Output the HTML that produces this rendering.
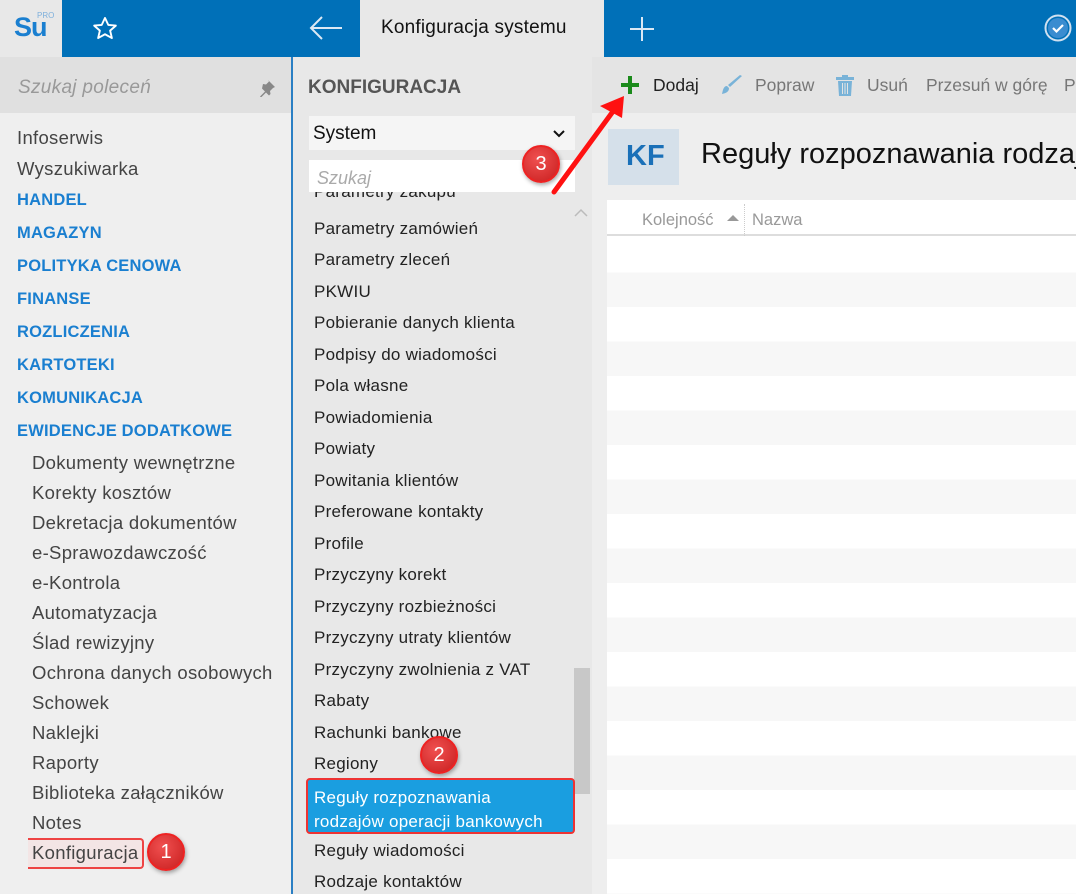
<!DOCTYPE html>
<html><head><meta charset="utf-8"><style>
*{margin:0;padding:0;box-sizing:border-box}
body{width:1076px;height:894px;overflow:hidden;position:relative;font-family:"Liberation Sans",sans-serif;background:#eee}
.a{position:absolute;white-space:nowrap}
.l{font-size:18.5px;color:#444;letter-spacing:.3px}
.h{font-size:16.5px;color:#1a7fd0;font-weight:bold;letter-spacing:.2px}
.m{font-size:17px;color:#222;left:314px;letter-spacing:.25px}
.badge{position:absolute;width:38px;height:38px;border-radius:50%;background:radial-gradient(circle at 40% 35%,#f05050,#c81e1e);border:2px solid #e22;color:#fff;font-size:20px;text-align:center;line-height:34px;box-shadow:1px 2px 4px rgba(0,0,0,.35)}
</style></head><body>
<!-- top bar -->
<div class="a" style="left:0;top:0;width:62px;height:57px;background:#e8e8e8"></div>
<div class="a" style="left:14px;top:12px;font-size:27px;color:#1a7fd0;font-weight:bold;letter-spacing:-1px">Su</div>
<div class="a" style="left:37px;top:11px;font-size:8px;color:#7fb0dc">PRO</div>
<div class="a" style="left:62px;top:0;width:298px;height:57px;background:#0070b8"></div>
<svg class="a" style="left:91px;top:15px" width="28" height="28" viewBox="0 0 24 24"><path d="M12 2.5l2.8 6 6.5.6-4.9 4.3 1.5 6.4L12 16.5l-5.9 3.3 1.5-6.4-4.9-4.3 6.5-.6z" fill="none" stroke="#fff" stroke-width="1.6" stroke-linejoin="round"/></svg>
<svg class="a" style="left:308px;top:14px" width="36" height="28" viewBox="0 0 36 28"><path d="M34 14H3M14 3L3 14l11 11" fill="none" stroke="#dbe8f4" stroke-width="2"/></svg>
<div class="a" style="left:360px;top:0;width:244px;height:57px;background:#e8e8e8"></div>
<div class="a" style="left:381px;top:17px;font-size:19px;color:#111;letter-spacing:.2px">Konfiguracja systemu</div>
<div class="a" style="left:604px;top:0;width:472px;height:57px;background:#0070b8"></div>
<svg class="a" style="left:628px;top:15px" width="28" height="28"><path d="M14 2v24M2 14h24" stroke="#dbe8f4" stroke-width="2"/></svg>
<svg class="a" style="left:1043px;top:13px" width="30" height="30"><circle cx="15" cy="15" r="12.5" fill="none" stroke="#cfe0f0" stroke-width="2"/><circle cx="15" cy="15" r="10" fill="#3a8cd0"/><path d="M10 15l3.5 3.5L20 12" fill="none" stroke="#fff" stroke-width="2.2"/></svg>
<!-- left panel -->
<div class="a" style="left:0;top:57px;width:291px;height:837px;background:#efefef"></div>
<div class="a" style="left:0;top:57px;width:291px;height:56px;background:#e0e0e0"></div>
<div class="a" style="left:18px;top:77px;font-size:19px;color:#999;font-style:italic;letter-spacing:.3px">Szukaj poleceń</div>
<svg class="a" style="left:258px;top:79px" width="18" height="18" viewBox="0 0 18 18"><path d="M10 1l7 7-2 1-3 3 .5 3-1.5 1.5-3-3-5 5-1-1 5-5-3-3L5 5l3 .5 3-3z" fill="#888"/></svg>
<div class="a" style="left:291px;top:57px;width:2px;height:837px;background:#2a7fc4"></div>
<div class="a l" style="left:17px;top:127px">Infoserwis</div>
<div class="a l" style="left:17px;top:158px">Wyszukiwarka</div>
<div class="a h" style="left:17px;top:191px">HANDEL</div>
<div class="a h" style="left:17px;top:224px">MAGAZYN</div>
<div class="a h" style="left:17px;top:257px">POLITYKA CENOWA</div>
<div class="a h" style="left:17px;top:290px">FINANSE</div>
<div class="a h" style="left:17px;top:323px">ROZLICZENIA</div>
<div class="a h" style="left:17px;top:356px">KARTOTEKI</div>
<div class="a h" style="left:17px;top:389px">KOMUNIKACJA</div>
<div class="a h" style="left:17px;top:422px">EWIDENCJE DODATKOWE</div>
<div class="a l" style="left:32px;top:452px">Dokumenty wewnętrzne</div>
<div class="a l" style="left:32px;top:482px">Korekty kosztów</div>
<div class="a l" style="left:32px;top:512px">Dekretacja dokumentów</div>
<div class="a l" style="left:32px;top:542px">e-Sprawozdawczość</div>
<div class="a l" style="left:32px;top:572px">e-Kontrola</div>
<div class="a l" style="left:32px;top:602px">Automatyzacja</div>
<div class="a l" style="left:32px;top:632px">Ślad rewizyjny</div>
<div class="a l" style="left:32px;top:662px">Ochrona danych osobowych</div>
<div class="a l" style="left:32px;top:692px">Schowek</div>
<div class="a l" style="left:32px;top:722px">Naklejki</div>
<div class="a l" style="left:32px;top:752px">Raporty</div>
<div class="a l" style="left:32px;top:782px">Biblioteka załączników</div>
<div class="a l" style="left:32px;top:812px">Notes</div>
<div class="a" style="left:28px;top:838px;width:116px;height:31px;border:2px solid #e44;border-left:none;border-radius:0 4px 4px 0;background:rgba(255,200,200,.25)"></div>
<div class="a l" style="left:32px;top:842px">Konfiguracja</div>
<div class="badge" style="left:147px;top:833px">1</div>
<!-- middle -->
<div class="a" style="left:293px;top:57px;width:299px;height:837px;background:#e8e8e8"></div>
<div class="a" style="left:308px;top:77px;font-size:19px;font-weight:bold;color:#555">KONFIGURACJA</div>
<div class="a" style="left:309px;top:116px;width:266px;height:34px;background:#f5f5f5"></div>
<div class="a" style="left:313px;top:123px;font-size:19px;color:#111">System</div>
<svg class="a" style="left:553px;top:130px" width="12" height="8"><path d="M1 1l5 5 5-5" fill="none" stroke="#111" stroke-width="2"/></svg>
<div class="a" style="left:309px;top:160px;width:266px;height:32px;background:#fff"></div>
<div class="a" style="left:317px;top:168px;font-size:18px;color:#aaa;font-style:italic">Szukaj</div>
<div class="a" style="left:293px;top:192px;width:280px;height:10px;overflow:hidden"><div class="m a" style="left:21px;top:-10px">Parametry zakupu</div></div>
<svg class="a" style="left:574px;top:208px" width="14" height="10"><path d="M1 8l6-6 6 6" fill="none" stroke="#bbb" stroke-width="1.5"/></svg>
<div class="a" style="left:574px;top:668px;width:16px;height:126px;background:#c8c8c8"></div>
<div class="a m" style="top:219px">Parametry zamówień</div>
<div class="a m" style="top:250px">Parametry zleceń</div>
<div class="a m" style="top:282px">PKWIU</div>
<div class="a m" style="top:313px">Pobieranie danych klienta</div>
<div class="a m" style="top:345px">Podpisy do wiadomości</div>
<div class="a m" style="top:376px">Pola własne</div>
<div class="a m" style="top:408px">Powiadomienia</div>
<div class="a m" style="top:439px">Powiaty</div>
<div class="a m" style="top:471px">Powitania klientów</div>
<div class="a m" style="top:502px">Preferowane kontakty</div>
<div class="a m" style="top:534px">Profile</div>
<div class="a m" style="top:565px">Przyczyny korekt</div>
<div class="a m" style="top:597px">Przyczyny rozbieżności</div>
<div class="a m" style="top:628px">Przyczyny utraty klientów</div>
<div class="a m" style="top:660px">Przyczyny zwolnienia z VAT</div>
<div class="a m" style="top:691px">Rabaty</div>
<div class="a m" style="top:723px">Rachunki bankowe</div>
<div class="a m" style="top:754px">Regiony</div>
<div class="a" style="left:306px;top:778px;width:269px;height:56px;background:#1a9ee0;border:2px solid #e33;border-radius:4px"></div>
<div class="a m" style="top:786px;color:#fff;line-height:24px">Reguły rozpoznawania<br>rodzajów operacji bankowych</div>
<div class="a m" style="top:841px">Reguły wiadomości</div>
<div class="a m" style="top:872px">Rodzaje kontaktów</div>
<div class="badge" style="left:420px;top:736px">2</div>
<!-- right -->
<div class="a" style="left:592px;top:57px;width:484px;height:56px;background:#e4e4e4"></div>
<svg class="a" style="left:620px;top:75px" width="20" height="20"><path d="M10 1v18M1 10h18" stroke="#1b8a1b" stroke-width="4"/></svg>
<div class="a" style="left:653px;top:75px;font-size:17.5px;color:#222">Dodaj</div>
<svg class="a" style="left:720px;top:74px" width="24" height="22" viewBox="0 0 24 22"><path d="M22 2L10 13l-2-2L20 1z" fill="#79b3d8"/><path d="M7 12c-3 0-4 3-5 8 4-1 7-2 7-6z" fill="#79b3d8"/></svg>
<div class="a" style="left:755px;top:75px;font-size:17.5px;color:#777">Popraw</div>
<svg class="a" style="left:836px;top:75px" width="18" height="22" viewBox="0 0 18 22"><rect x="0" y="2" width="18" height="3" fill="#79b3d8"/><rect x="6" y="0" width="6" height="3" fill="#79b3d8"/><path d="M2 6h14l-1 15H3z" fill="#79b3d8"/><path d="M6.5 8v11M9 8v11M11.5 8v11" stroke="#e4e4e4" stroke-width="1"/></svg>
<div class="a" style="left:867px;top:75px;font-size:17.5px;color:#777">Usuń</div>
<div class="a" style="left:926px;top:75px;font-size:17.5px;color:#777">Przesuń w górę</div>
<div class="a" style="left:1064px;top:75px;font-size:17.5px;color:#777">P</div>
<div class="a" style="left:608px;top:129px;width:71px;height:56px;background:#d5e0ea"></div>
<div class="a" style="left:626px;top:140px;font-size:29px;color:#1a70b8;font-weight:bold">KF</div>
<div class="a" style="left:701px;top:138px;font-size:29px;color:#111">Reguły rozpoznawania rodzajów</div>
<div class="a" style="left:607px;top:200px;width:469px;height:694px;background:repeating-linear-gradient(#fff 0 34.5px,#f7f7f7 34.5px 69px);background-position:0 38px"></div>
<div class="a" style="left:607px;top:200px;width:469px;height:36px;background:#fff;border-bottom:2px solid #ddd"></div>
<div class="a" style="left:642px;top:211px;font-size:16.5px;color:#999">Kolejność</div>
<svg class="a" style="left:727px;top:214px" width="12" height="8"><path d="M0 7l6-6 6 6z" fill="#999"/></svg>
<div class="a" style="left:744px;top:204px;width:1px;height:32px;border-left:1px dotted #ccc"></div>
<div class="a" style="left:752px;top:211px;font-size:16.5px;color:#999">Nazwa</div>
<!-- arrow -->
<svg class="a" style="left:540px;top:80px" width="100" height="120"><path d="M14 112L74 30" stroke="#f11" stroke-width="5" stroke-linecap="round"/><path d="M84 16L60 26l22 12z" fill="#f11"/></svg>
<div class="badge" style="left:522px;top:145px">3</div>
</body></html>
